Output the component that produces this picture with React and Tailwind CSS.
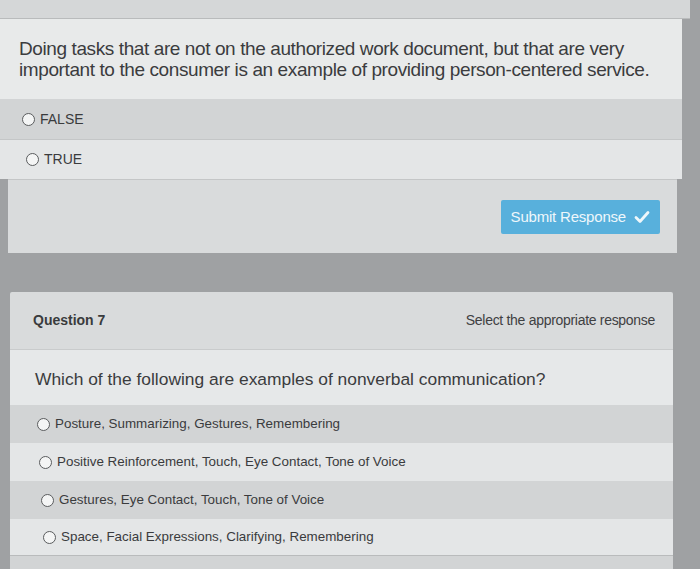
const FONT = { fontFamily: '"Liberation Sans", Arial, sans-serif' };

const Q7_OPTIONS = [
  'Posture, Summarizing, Gestures, Remembering',
  'Positive Reinforcement, Touch, Eye Contact, Tone of Voice',
  'Gestures, Eye Contact, Touch, Tone of Voice',
  'Space, Facial Expressions, Clarifying, Remembering',
];

function Radio() {
  return (
    <span className="inline-block w-[13px] h-[13px] rounded-full border-[1.5px] border-[#5a5c5e] bg-[#f4f5f5] flex-shrink-0" />
  );
}

function Option({ label, dark, h, indent, size = 'text-[13.4px]' }) {
  return (
    <div
      className={`flex items-center gap-[5px] ${size} text-[#3a3b3d] ${dark ? 'bg-[#d2d4d5]' : 'bg-[#e4e6e7]'} ${h} ${indent}`}
    >
      <Radio />
      <span>{label}</span>
    </div>
  );
}

export default function App() {
  return (
    <div className="w-[700px] h-[569px] overflow-hidden bg-[#9fa1a3]" style={FONT}>
      {/* previous card tail */}
      <div className="h-[19px] w-[690px] bg-[#d5d7d8] border-b border-[#b9bbbc]" />

      {/* Question 6 */}
      <div className="w-[682px]">
        <div className="h-[80px] bg-[#e8eaea] pl-[19px] pt-[19px]">
          <p className="text-[19px] leading-[21px] text-[#3b3c3e] tracking-[-0.4px]">
            Doing tasks that are not on the authorized work document, but that are very
            <br />
            important to the consumer is an example of providing person-centered service.
          </p>
        </div>
        <Option label="FALSE" dark h="h-[40px]" indent="pl-[22px]" size="text-[14px]" />
        <Option label="TRUE" h="h-[40px] border-t border-[#c4c6c7]" indent="pl-[26px]" size="text-[14px]" />
      </div>

      {/* footer */}
      <div className="ml-[8px] w-[669px] h-[74px] bg-[#d9dbdc] border-t border-[#c4c6c7] flex justify-end items-start pt-[20px] pr-[17px]">
        <button className="flex items-center gap-[8px] h-[34px] pl-[10px] pr-[10px] rounded-[2px] bg-[#58b0dc] text-[15px] tracking-[-0.2px] text-[#eef7fb]">
          Submit Response
          <svg width="16" height="14" viewBox="0 0 16 14">
            <path d="M2 7.5l4 4L14 2.5" fill="none" stroke="#eef7fb" strokeWidth="2.8" strokeLinecap="round" strokeLinejoin="round" />
          </svg>
        </button>
      </div>

      <div className="h-[39px]" />

      {/* Question 7 */}
      <div className="ml-[10px] w-[663px]">
        <div className="h-[57px] bg-[#d9dbdc] flex items-center justify-between pl-[23px] pr-[18px] rounded-t-[2px]">
          <span className="text-[14px] font-bold text-[#3a3b3d]">Question 7</span>
          <span className="text-[14px] text-[#3f4042] tracking-[-0.3px]">Select the appropriate response</span>
        </div>
        <div className="h-[56px] bg-[#e6e8e9] border-t border-[#c9cbcc] pl-[25px] pt-[16px]">
          <p className="text-[17.4px] text-[#3b3c3e]">Which of the following are examples of nonverbal communication?</p>
        </div>
        {Q7_OPTIONS.map((o, i) => (
          <Option
            key={o}
            label={o}
            dark={i % 2 === 0}
            h={i === 3 ? 'h-[36px]' : 'h-[38px]'}
            indent={['pl-[27px]', 'pl-[29px]', 'pl-[31px]', 'pl-[33px]'][i]}
          />
        ))}
        <div className="h-[20px] bg-[#d2d4d5] border-t border-[#b9bbbc]" />
      </div>
    </div>
  );
}
